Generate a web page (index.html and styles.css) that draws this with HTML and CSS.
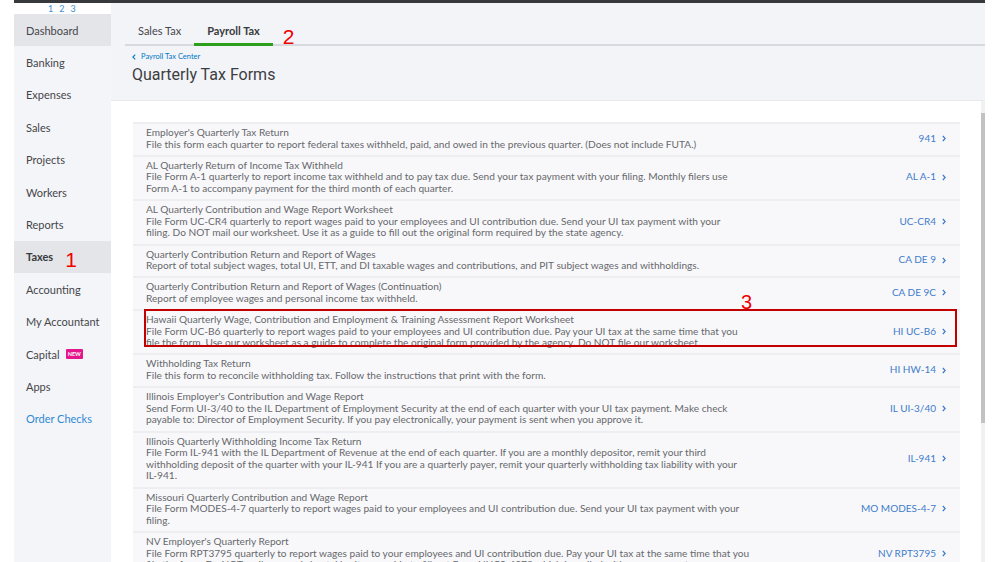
FILE: index.html
```html
<!DOCTYPE html>
<html lang="en">
<head>
<meta charset="utf-8">
<title>Quarterly Tax Forms</title>
<link rel="stylesheet" href="styles.css">
</head>
<body>
<div class="app">
  <div class="topbar"></div>
  <div class="frame">
    <aside class="sidebar">
      <div class="steps"><span>1</span><span>2</span><span>3</span></div>
      <nav class="nav">
        <div class="nav-item hover">Dashboard</div>
        <div class="nav-item">Banking</div>
        <div class="nav-item">Expenses</div>
        <div class="nav-item">Sales</div>
        <div class="nav-item">Projects</div>
        <div class="nav-item">Workers</div>
        <div class="nav-item">Reports</div>
        <div class="nav-item active">Taxes<span class="anno anno-1">1</span></div>
        <div class="nav-item">Accounting</div>
        <div class="nav-item">My Accountant</div>
        <div class="nav-item">Capital<span class="badge">NEW</span></div>
        <div class="nav-item">Apps</div>
        <div class="nav-item link-item">Order Checks</div>
      </nav>
    </aside>
    <main class="main">
      <header class="header">
        <div class="tabs">
          <div class="tab">Sales Tax</div>
          <div class="tab active">Payroll Tax</div>
          <span class="anno anno-2">2</span>
        </div>
        <div class="back">
          <svg width="4" height="6" viewBox="0 0 4 6"><polyline points="3.2,0.6 0.9,3 3.2,5.4" fill="none" stroke="#0077c5" stroke-width="1.1"/></svg>
          <span>Payroll Tax Center</span>
        </div>
        <h1 class="title">Quarterly Tax Forms</h1>
      </header>
      <div class="content">
        <section class="card">
          <div class="row">
            <div class="desc"><div>Employer's Quarterly Tax Return</div>File this form each quarter to report federal taxes withheld, paid, and owed in the previous quarter. (Does not include FUTA.)</div>
            <a class="link">941<svg class="chev" width="4" height="7" viewBox="0 0 4 7"><polyline points="0.8,0.8 3.1,3.5 0.8,6.2" fill="none" stroke="#3f7ccb" stroke-width="1.3"/></svg></a>
          </div>
          <div class="row">
            <div class="desc"><div>AL Quarterly Return of Income Tax Withheld</div>File Form A-1 quarterly to report income tax withheld and to pay tax due. Send your tax payment with your filing. Monthly filers use<br>Form A-1 to accompany payment for the third month of each quarter.</div>
            <a class="link">AL A-1<svg class="chev" width="4" height="7" viewBox="0 0 4 7"><polyline points="0.8,0.8 3.1,3.5 0.8,6.2" fill="none" stroke="#3f7ccb" stroke-width="1.3"/></svg></a>
          </div>
          <div class="row">
            <div class="desc"><div>AL Quarterly Contribution and Wage Report Worksheet</div>File Form UC-CR4 quarterly to report wages paid to your employees and UI contribution due. Send your UI tax payment with your<br>filing. Do NOT mail our worksheet. Use it as a guide to fill out the original form required by the state agency.</div>
            <a class="link">UC-CR4<svg class="chev" width="4" height="7" viewBox="0 0 4 7"><polyline points="0.8,0.8 3.1,3.5 0.8,6.2" fill="none" stroke="#3f7ccb" stroke-width="1.3"/></svg></a>
          </div>
          <div class="row">
            <div class="desc"><div>Quarterly Contribution Return and Report of Wages</div>Report of total subject wages, total UI, ETT, and DI taxable wages and contributions, and PIT subject wages and withholdings.</div>
            <a class="link">CA DE 9<svg class="chev" width="4" height="7" viewBox="0 0 4 7"><polyline points="0.8,0.8 3.1,3.5 0.8,6.2" fill="none" stroke="#3f7ccb" stroke-width="1.3"/></svg></a>
          </div>
          <div class="row">
            <div class="desc"><div>Quarterly Contribution Return and Report of Wages (Continuation)</div>Report of employee wages and personal income tax withheld.</div>
            <a class="link">CA DE 9C<svg class="chev" width="4" height="7" viewBox="0 0 4 7"><polyline points="0.8,0.8 3.1,3.5 0.8,6.2" fill="none" stroke="#3f7ccb" stroke-width="1.3"/></svg></a>
          </div>
          <div class="row highlighted">
            <div class="desc"><div>Hawaii Quarterly Wage, Contribution and Employment &amp; Training Assessment Report Worksheet</div>File Form UC-B6 quarterly to report wages paid to your employees and UI contribution due. Pay your UI tax at the same time that you<br>file the form. Use our worksheet as a guide to complete the original form provided by the agency. Do NOT file our worksheet.</div>
            <a class="link">HI UC-B6<svg class="chev" width="4" height="7" viewBox="0 0 4 7"><polyline points="0.8,0.8 3.1,3.5 0.8,6.2" fill="none" stroke="#3f7ccb" stroke-width="1.3"/></svg></a>
            <div class="callout"></div>
            <span class="anno anno-3">3</span>
          </div>
          <div class="row">
            <div class="desc"><div>Withholding Tax Return</div>File this form to reconcile withholding tax. Follow the instructions that print with the form.</div>
            <a class="link">HI HW-14<svg class="chev" width="4" height="7" viewBox="0 0 4 7"><polyline points="0.8,0.8 3.1,3.5 0.8,6.2" fill="none" stroke="#3f7ccb" stroke-width="1.3"/></svg></a>
          </div>
          <div class="row">
            <div class="desc"><div>Illinois Employer's Contribution and Wage Report</div>Send Form UI-3/40 to the IL Department of Employment Security at the end of each quarter with your UI tax payment. Make check<br>payable to: Director of Employment Security. If you pay electronically, your payment is sent when you approve it.</div>
            <a class="link">IL UI-3/40<svg class="chev" width="4" height="7" viewBox="0 0 4 7"><polyline points="0.8,0.8 3.1,3.5 0.8,6.2" fill="none" stroke="#3f7ccb" stroke-width="1.3"/></svg></a>
          </div>
          <div class="row">
            <div class="desc"><div>Illinois Quarterly Withholding Income Tax Return</div>File Form IL-941 with the IL Department of Revenue at the end of each quarter. If you are a monthly depositor, remit your third<br>withholding deposit of the quarter with your IL-941 If you are a quarterly payer, remit your quarterly withholding tax liability with your<br>IL-941.</div>
            <a class="link">IL-941<svg class="chev" width="4" height="7" viewBox="0 0 4 7"><polyline points="0.8,0.8 3.1,3.5 0.8,6.2" fill="none" stroke="#3f7ccb" stroke-width="1.3"/></svg></a>
          </div>
          <div class="row">
            <div class="desc"><div>Missouri Quarterly Contribution and Wage Report</div>File Form MODES-4-7 quarterly to report wages paid to your employees and UI contribution due. Send your UI tax payment with your<br>filing.</div>
            <a class="link">MO MODES-4-7<svg class="chev" width="4" height="7" viewBox="0 0 4 7"><polyline points="0.8,0.8 3.1,3.5 0.8,6.2" fill="none" stroke="#3f7ccb" stroke-width="1.3"/></svg></a>
          </div>
          <div class="row">
            <div class="desc"><div>NV Employer's Quarterly Report</div>File Form RPT3795 quarterly to report wages paid to your employees and UI contribution due. Pay your UI tax at the same time that you<br>file the form. Do NOT mail our worksheet. Use it as a guide to fill out Form NUCS-4072 which is mailed with your payment.</div>
            <a class="link">NV RPT3795<svg class="chev" width="4" height="7" viewBox="0 0 4 7"><polyline points="0.8,0.8 3.1,3.5 0.8,6.2" fill="none" stroke="#3f7ccb" stroke-width="1.3"/></svg></a>
          </div>
        </section>
        <div class="scrollbar"><div class="thumb"></div></div>
      </div>
    </main>
  </div>
</div>
</body>
</html>
```

FILE: styles.css
```css
* { box-sizing: border-box; }
html, body { margin: 0; padding: 0; background: #ffffff; }
body { font-family: Lato, "Open Sans", sans-serif; color: #393a3d; }

.app {
  margin-left: 14px;
  width: 971px;
  height: 562px;
  display: flex;
  flex-direction: column;
  overflow: hidden;
}
.topbar { height: 3px; background: #38393c; flex: none; }
.frame { flex: 1; display: flex; min-height: 0; }

/* Sidebar */
.sidebar { width: 97px; flex: none; display: flex; flex-direction: column; }
.steps {
  height: 11px;
  display: flex;
  gap: 6px;
  padding-left: 34px;
  font-size: 9px;
  line-height: 11px;
  color: #3b8fd3;
  background: #ffffff;
}
.nav { flex: 1; background: #f4f5f8; }
.nav-item {
  height: 32.4px;
  display: flex;
  align-items: center;
  padding-left: 12px;
  font-size: 11px;
  color: #45464a;
}
.nav-item.hover { background: #e4e5e9; }
.nav-item.active { background: #e4e5e9; font-weight: 700; color: #393a3d; }
.nav-item.link-item { color: #2f8ad6; }
.badge {
  margin-left: 6px;
  background: #e3168c;
  color: #fff;
  font-size: 5.5px;
  font-weight: 700;
  line-height: 10px;
  height: 10px;
  padding: 0 2px;
  border-radius: 1px;
}

.anno {
  font-family: "Liberation Sans", Arial, sans-serif;
  color: #f10000;
  font-size: 21px;
  line-height: 1;
  font-weight: 400;
}
.anno-1 { margin-left: 12px; margin-top: 6px; }

/* Main */
.main { flex: 1; display: flex; flex-direction: column; min-width: 0; }
.header {
  height: 98px;
  flex: none;
  background: #f3f4f8;
  padding-top: 15px;
  border-bottom: 1px solid #e9eaee;
}
.tabs {
  display: flex;
  align-items: flex-start;
  margin-left: 14px;
  height: 28px;
  box-shadow: inset 0 -2px 0 #d6d9de;
}
.tab {
  padding: 0 13px;
  height: 28px;
  line-height: 26px;
  font-size: 11px;
  color: #45464a;
}
.tab.active { font-weight: 700; color: #393a3d; box-shadow: inset 0 -3px 0 #2ca01c; }
.anno-2 { margin-left: 10px; margin-top: 8px; }

.back {
  display: flex;
  align-items: center;
  gap: 5px;
  margin: 6px 0 0 21px;
  font-size: 7.5px;
  line-height: 10px;
  color: #0077c5;
}
.title {
  margin: 2px 0 0 21px;
  font-family: Roboto, sans-serif;
  font-size: 16px;
  font-weight: 400;
  line-height: 21px;
  color: #3d3e42;
}

.content { flex: 1; display: flex; min-height: 0; }
.card {
  flex: 1;
  background: #ffffff;
  padding: 21px 21px 0 22px;
  overflow: hidden;
}
.scrollbar { width: 4px; flex: none; background: #f1f1f1; }
.thumb { margin-top: 12px; height: 310px; background: #c2c2c2; }

.row {
  position: relative;
  display: flex;
  align-items: center;
  background: #f8f8fa;
  border-top: 2px solid #eceef1;
  padding: 3px 14px 4.6px 13px;
  font-size: 10.15px;
  line-height: 11.6px;
  color: #67686d;
}
.desc { flex: 1; min-width: 0; white-space: nowrap; }
.link {
  display: flex;
  align-items: center;
  gap: 6px;
  color: #3f7ccb;
  font-size: 10px;
}
.chev { display: block; }

.callout {
  position: absolute;
  left: 11px;
  right: 3px;
  top: -2px;
  height: 38px;
  border: 2px solid #c30000;
  pointer-events: none;
}
.anno-3 { position: absolute; left: 608px; top: -19px; font-size: 20px; }
```
